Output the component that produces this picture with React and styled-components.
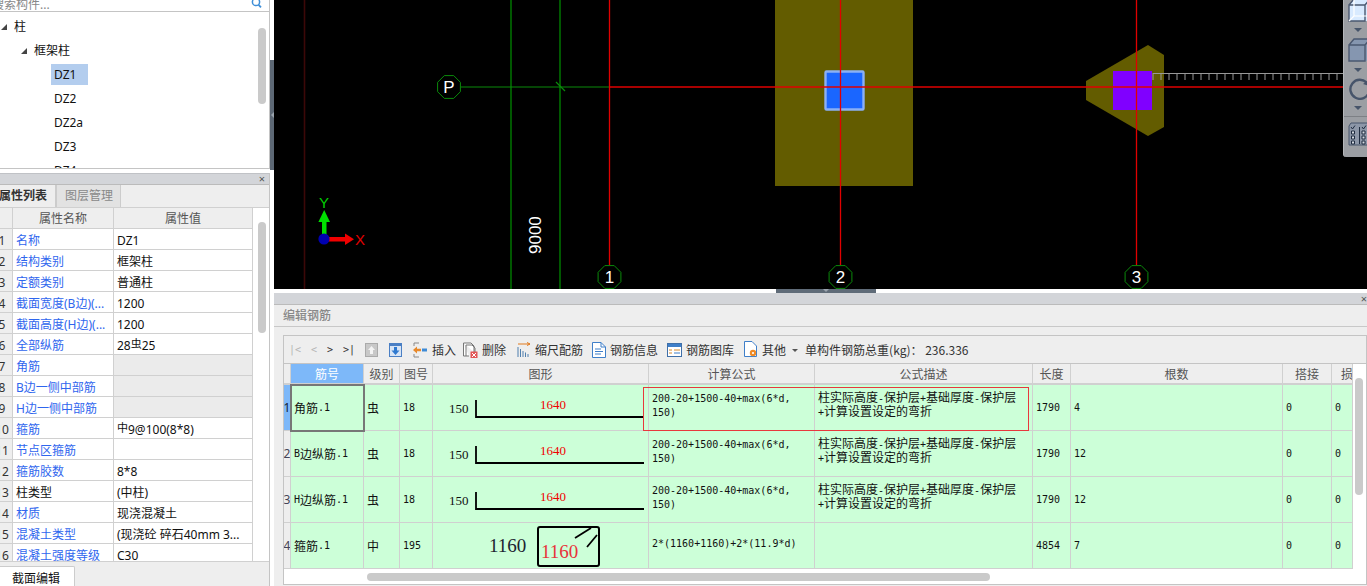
import React from "react";
import styled, { createGlobalStyle } from "styled-components";

const GlobalStyle = createGlobalStyle`
  html, body {
    margin: 0;
    padding: 0;
    background: #fff;
    overflow: hidden;
  }
  * {
    box-sizing: border-box;
  }
`;

const UI_FONT = `"Noto Sans", "Noto Sans CJK SC", sans-serif`;
const CJK_FONT = `"Noto Sans CJK SC", sans-serif`;
const MONO_FONT = `"DejaVu Sans Mono", monospace`;
const LINE = "#d0d0d0";
const GREEN_ROW = "#ccffd8";

const Page = styled.div`
  display: flex;
  width: 1367px;
  height: 586px;
  overflow: hidden;
  font: 12px ${UI_FONT};
  color: #111;
`;

const LeftColumn = styled.div`
  display: flex;
  flex-direction: column;
  width: 270px;
  flex: none;
`;

/* tree */
const TreePanel = styled.div`
  position: relative;
  height: 170px;
  border-right: 1px solid #c4c4c4;
  border-bottom: 1px solid #c4c4c4;
  overflow: hidden;
`;

const SearchBar = styled.div`
  display: flex;
  align-items: flex-end;
  justify-content: space-between;
  height: 12px;
  padding: 0 7px 0 0;
  border-bottom: 1px solid #c4c4c4;
  color: #888;
  line-height: 12px;
  overflow: hidden;

  span {
    margin-left: -8px;
    white-space: nowrap;
  }
`;

const TreeList = styled.div`
  padding-top: 2px;
`;

const TreeRow = styled.div`
  display: flex;
  align-items: center;
  height: 24px;
  padding-left: ${(p) => p.$indent}px;
`;

const TreeArrow = styled.i`
  width: 0;
  height: 0;
  margin: 2px 7px 0 1px;
  border-style: solid;
  border-width: 0 0 6px 6px;
  border-color: transparent transparent #444 transparent;
`;

const TreeLeaf = styled.span`
  height: 21px;
  width: 37px;
  padding-left: 3px;
  line-height: 21px;
  white-space: nowrap;
  background: ${(p) => (p.$selected ? "#b3cdee" : "transparent")};
`;

const ScrollThumb = styled.div`
  position: absolute;
  top: ${(p) => p.$top}px;
  left: ${(p) => p.$left}px;
  width: ${(p) => p.$w}px;
  height: ${(p) => p.$h}px;
  background: #cacaca;
  border-radius: 4px;
`;

/* property list */
const PropertyPanel = styled.div`
  position: relative;
  display: flex;
  flex-direction: column;
  flex: 1;
  margin-top: 4px;
  background: #eee;
  border-right: 1px solid #c4c4c4;
`;

const DockBar = styled.div`
  display: flex;
  align-items: center;
  justify-content: flex-end;
  flex: none;
  height: 12px;
  padding-right: 4px;
  background: #d3d5d9;
  border-top: 1px solid #c0c2c6;
  border-bottom: 1px solid #bbb;
  color: #555;
  font-size: 11px;
  line-height: 10px;
`;

const TabRow = styled.div`
  display: flex;
  flex: none;
  height: 22px;
  overflow: hidden;
`;

const Tab = styled.div`
  width: 65px;
  padding: 0 8px;
  margin-left: ${(p) => (p.$active ? "-9px" : "0")};
  line-height: 22px;
  white-space: nowrap;
  font-weight: ${(p) => (p.$active ? 700 : 400)};
  color: ${(p) => (p.$active ? "#333" : "#888")};
  background: ${(p) => (p.$active ? "#eee" : "#e2e2e2")};
  border-right: 1px solid #ccc;
  border-left: ${(p) => (p.$active ? "none" : "1px solid #ccc")};
`;

const PropertyBody = styled.div`
  height: 355px;
  flex: none;
  background: #fff;
  border-top: 1px solid ${LINE};
  border-bottom: 1px solid ${LINE};
  overflow: hidden;
`;

const PropertyGrid = styled.div`
  display: grid;
  grid-template-columns: 13px 101px 139px;
  grid-auto-rows: 21px;
  width: 253px;
`;

const PropHead = styled.div`
  text-align: center;
  line-height: 20px;
  color: #555;
  background: #eee;
  border-right: 1px solid ${LINE};
  border-bottom: 1px solid ${LINE};
  font-family: ${CJK_FONT};
`;

const PropIndex = styled.div`
  overflow: hidden;
  background: #eee;
  border-right: 1px solid ${LINE};
  border-bottom: 1px solid ${LINE};
  line-height: 24px;
  color: #333;

  span {
    display: block;
    width: 24px;
    margin-left: -10px;
    text-align: center;
  }
`;

const PropName = styled.div`
  padding-left: 3px;
  line-height: 24px;
  white-space: nowrap;
  overflow: hidden;
  color: ${(p) => (p.$plain ? "#111" : "#2f66ee")};
  border-right: 1px solid ${LINE};
  border-bottom: 1px solid ${LINE};
`;

const PropValue = styled.div`
  padding-left: 3px;
  line-height: 24px;
  white-space: nowrap;
  overflow: hidden;
  background: ${(p) => (p.$muted ? "#ebebeb" : "#fff")};
  border-right: 1px solid ${LINE};
  border-bottom: 1px solid ${LINE};
`;

const RaisedMark = styled.span`
  position: relative;
  top: -2px;
  font-size: 11px;
`;

const BottomTabs = styled.div`
  flex: 1;
  padding-top: 4px;
  background: #eee;
`;

const BottomTab = styled.div`
  width: 75px;
  height: 20px;
  padding-left: 12px;
  background: #fff;
  border-right: 1px solid #ccc;
  border-top: 1px solid #ccc;
  border-top-right-radius: 2px;
  line-height: 24px;
  white-space: nowrap;
`;

const SideSplit = styled.div`
  position: relative;
  display: flex;
  align-items: center;
  justify-content: center;
  width: 4px;
  height: 110px;
  margin-top: 60px;
  flex: none;
  background: #5d6875;

  &::after {
    content: "";
    border-style: solid;
    border-width: 3px 3px 3px 0;
    border-color: transparent #9aa3ad transparent transparent;
  }
`;

/* main column */
const MainColumn = styled.div`
  display: flex;
  flex-direction: column;
  flex: 1;
  min-width: 0;
`;

const Canvas = styled.div`
  position: relative;
  flex: none;
  height: 289px;
  background: #000;
  overflow: hidden;

  > svg {
    display: block;
  }
`;

const SideTools = styled.div`
  position: absolute;
  top: 0;
  right: 0;
  display: flex;
  flex-direction: column;
  width: 24px;
  height: 157px;
  padding-left: 4px;
  background: #9b9ea3;
  border-left: 1px solid #b5b7ba;
  border-bottom-left-radius: 3px;
  overflow: hidden;
`;

const SideCaret = styled.i`
  align-self: center;
  width: 0;
  height: 0;
  margin: ${(p) => p.$my}px 0;
  border-style: solid;
  border-width: 4px 4px 0 4px;
  border-color: #46546a transparent transparent transparent;
`;

const SideRule = styled.div`
  height: 1px;
  margin: 0 -4px 5px;
  background: #7d8085;
`;

const HSplitBand = styled.div`
  display: flex;
  justify-content: center;
  flex: none;
  height: 4px;
  background: #fff;
`;

const HSplitHandle = styled.div`
  display: flex;
  justify-content: center;
  width: 100px;
  margin-left: 11px;
  background: #5f6b78;

  &::after {
    content: "";
    height: 0;
    border-style: solid;
    border-width: 3px 3px 0 3px;
    border-color: #9aa3ad transparent transparent transparent;
  }
`;

const EditorDock = styled(DockBar)`
  border-top: none;
  padding-right: 0;
`;

const EditorPanel = styled.div`
  display: flex;
  flex-direction: column;
  flex: 1;
  min-height: 0;
  background: #eee;
`;

const EditorTitle = styled.div`
  flex: none;
  height: 22px;
  padding-left: 9px;
  line-height: 20px;
  color: #888;
  font-family: ${CJK_FONT};
  font-weight: 500;
  border-bottom: 1px solid #c8c8c8;
`;

const EditorBody = styled.div`
  display: flex;
  flex: 1;
  min-height: 0;
  padding: 8px 0 1px 9px;
`;

const Frame = styled.div`
  display: flex;
  flex-direction: column;
  flex: 1;
  border: 1px solid #c4c4c4;
`;

const Toolbar = styled.div`
  display: flex;
  align-items: center;
  flex: none;
  height: 28px;
  padding-left: 5px;
  font-family: ${CJK_FONT};
  color: #333;
  border-bottom: 1px solid #c4c4c4;
  white-space: pre;
`;

const NavGroup = styled.div`
  display: flex;
  align-items: center;
  width: 66px;
  justify-content: space-between;
  font: 10px ${MONO_FONT};
`;

const NavMark = styled.span`
  color: ${(p) => (p.$dim ? "#b5b5b5" : "#333")};
`;

const Tool = styled.div`
  display: flex;
  align-items: center;
  gap: 4px;
  margin-left: ${(p) => p.$ml}px;
`;

const ToolCaret = styled.i`
  width: 0;
  height: 0;
  margin: 1px 7px 0 6px;
  border-style: solid;
  border-width: 3px 3px 0 3px;
  border-color: #555 transparent transparent transparent;
`;

const TableArea = styled.div`
  position: relative;
  flex: 1;
  min-height: 0;
  background: #fff;
  overflow: hidden;
`;

const RebarRow = styled.div`
  position: relative;
  display: grid;
  grid-template-columns: 7px 73px 36px 33px 216px 166px 218px 38px 212px 49px 21px;
  width: 1069px;
  height: ${(p) => p.$h}px;
`;

const HeadCell = styled.div`
  padding-left: ${(p) => p.$pad || 0}px;
  text-align: ${(p) => (p.$pad ? "left" : "center")};
  line-height: 19px;
  font-family: ${CJK_FONT};
  overflow: hidden;
  color: ${(p) => (p.$selected ? "#fff" : "#555")};
  background: ${(p) => (p.$selected ? "#7db8f9" : "#eee")};
  border-right: 1px solid ${LINE};
  border-bottom: 2px solid ${LINE};
`;

const IndexCell = styled.div`
  display: flex;
  align-items: center;
  justify-content: center;
  overflow: hidden;
  color: ${(p) => (p.$selected ? "#123" : "#445")};
  background: ${(p) => (p.$selected ? "#7db8f9" : "#eee")};
  border-right: 1px solid ${LINE};
  border-bottom: 1px solid ${LINE};
`;

const Cell = styled.div`
  display: flex;
  align-items: center;
  padding-left: 3px;
  min-width: 0;
  overflow: hidden;
  line-height: 14px;
  font-family: ${CJK_FONT};
  background: ${GREEN_ROW};
  border-right: 1px solid ${LINE};
  border-bottom: 1px solid ${LINE};
`;

const NameCell = styled(Cell)`
  outline: ${(p) => (p.$selected ? "2px solid #777" : "none")};
  outline-offset: -1px;
  position: relative;
  z-index: ${(p) => (p.$selected ? 1 : 0)};
`;

const ShapeCell = styled(Cell)`
  padding: 0;
`;

const Latin = styled.span`
  font: 10px ${MONO_FONT};
`;

const LinesBlock = styled.div`
  margin-bottom: 8px;
`;

const CellOutline = styled.div`
  position: absolute;
  top: 2px;
  left: 359px;
  width: 386px;
  height: 44px;
  border: 1px solid #e8383d;
  pointer-events: none;
`;

const SHAPE_LABEL = `"Liberation Serif", serif`;

function mixed(text) {
  return text
    .split(/([\x00-\x7f]+)/)
    .filter(Boolean)
    .map((run, i) =>
      /^[\x00-\x7f]/.test(run) ? <Latin key={i}>{run}</Latin> : <span key={i}>{run}</span>
    );
}

function SearchIcon() {
  return (
    <svg width="11" height="12" viewBox="0 0 11 12">
      <circle cx="5" cy="3" r="3.6" fill="none" stroke="#3f8fd8" strokeWidth="1.5" />
      <path d="M7.6 5.8 L10 8.4" stroke="#3f8fd8" strokeWidth="1.8" />
    </svg>
  );
}

function polygonPoints(cx, cy, r, sides) {
  const pts = [];
  for (let i = 0; i < sides; i++) {
    const a = (Math.PI * 2 * (i + 0.5)) / sides;
    pts.push(`${(cx + r * Math.cos(a)).toFixed(1)},${(cy + r * Math.sin(a)).toFixed(1)}`);
  }
  return pts.join(" ");
}

function AxisBubble({ x, y, label }) {
  return (
    <g>
      <polygon points={polygonPoints(x, y, 12.3, 8)} fill="#000" stroke="#0b8a0b" strokeWidth="1" />
      <text x={x} y={y + 6} textAnchor="middle" fill="#fff" fontSize="17" fontFamily="Liberation Sans, sans-serif">
        {label}
      </text>
    </g>
  );
}

function Ruler() {
  const ticks = [];
  for (let x = 1153; x < 1343; x += 8) {
    ticks.push(<line key={x} x1={x} x2={x} y1="73" y2="80" stroke="#999" />);
  }
  return (
    <g>
      <line x1="1153" x2="1343" y1="73.5" y2="73.5" stroke="#999" />
      {ticks}
    </g>
  );
}

function CanvasDrawing() {
  return (
    <svg width="1093" height="289" viewBox="274 0 1093 289">
      <line x1="304.5" x2="304.5" y1="0" y2="289" stroke="#3c0808" strokeWidth="1.6" />
      <line x1="511" x2="511" y1="0" y2="289" stroke="#006e00" strokeWidth="1.6" />
      <line x1="560" x2="560" y1="0" y2="289" stroke="#006e00" strokeWidth="1.6" />
      <rect x="775" y="0" width="138" height="186" fill="#635c00" />
      <polygon points="1086,81 1148,45 1164,55 1164,127 1148,136 1086,100" fill="#635c00" />
      <rect x="825.5" y="71.5" width="38" height="38" fill="#1a66ff" stroke="#8bb0f5" strokeWidth="2.4" rx="1" />
      <rect x="1113" y="71" width="39" height="39" fill="#8000ff" />
      <Ruler />
      <line x1="461" x2="609" y1="87" y2="87" stroke="#0b8a0b" strokeWidth="1.2" />
      <line x1="556" x2="565" y1="82" y2="91" stroke="#0b8a0b" strokeWidth="1.2" />
      <line x1="609" x2="1343" y1="87" y2="87" stroke="#e00000" strokeWidth="1.4" />
      <line x1="609.5" x2="609.5" y1="0" y2="289" stroke="#e00000" strokeWidth="1.3" />
      <line x1="840.5" x2="840.5" y1="0" y2="289" stroke="#e00000" strokeWidth="1.3" />
      <line x1="1136.5" x2="1136.5" y1="0" y2="289" stroke="#e00000" strokeWidth="1.3" />
      <AxisBubble x={449} y={87} label="P" />
      <AxisBubble x={609.5} y={277} label="1" />
      <AxisBubble x={840.5} y={277} label="2" />
      <AxisBubble x={1136.5} y={277} label="3" />
      <text
        transform="translate(541 254) rotate(-90)"
        fill="#fff"
        fontSize="17"
        fontFamily="Liberation Sans, sans-serif"
      >
        9000
      </text>
      <rect x="322" y="220" width="4.5" height="16" fill="#00e000" />
      <polygon points="324.2,210 330,222 318.4,222" fill="#00e000" />
      <text x="324" y="208" textAnchor="middle" fill="#00d000" fontSize="15" fontFamily="Liberation Sans, sans-serif">
        Y
      </text>
      <rect x="328" y="237" width="18" height="4.5" fill="#f00000" />
      <polygon points="354,239.2 345,233.5 345,245" fill="#f00000" />
      <text x="355" y="245" fill="#e00000" fontSize="15" fontFamily="Liberation Sans, sans-serif">
        X
      </text>
      <circle cx="324" cy="239" r="5.6" fill="#0000b0" />
    </svg>
  );
}

function CubeIcon({ fill, top, inner }) {
  return (
    <svg width="22" height="24" viewBox="0 0 22 24" style={{ marginTop: top, flex: "none" }}>
      <path d="M1 7 L6 1 H22 V23 H1 Z" fill={fill} />
      <path d="M1 7 L6 1 H22 M1 7 H17 V23 H1 Z M17 7 L22 1" fill="none" stroke="#4a5870" strokeWidth="1.4" />
      {inner && <path d="M6 2 V18 H22 M6 18 L1 23" fill="none" stroke="#fff" strokeWidth="1.2" />}
    </svg>
  );
}

function RotateIcon() {
  return (
    <svg width="22" height="22" viewBox="0 0 22 22" style={{ flex: "none" }}>
      <path d="M19 5 A9.5 9.5 0 1 0 21 14" fill="none" stroke="#46546a" strokeWidth="2.4" />
      <path d="M15 6 L22 8 L22 1 Z" fill="#46546a" />
    </svg>
  );
}

function ChecklistIcon() {
  return (
    <svg width="22" height="24" viewBox="0 0 22 24" style={{ flex: "none" }}>
      <path d="M1 4 L3 1 H22 V23 H1 Z" fill="#8d97a8" stroke="#46546a" />
      <path d="M11.5 5 V22 M3 5 L4.5 7 L7 3.5 M14 5 L15.5 7 L18 3.5" fill="none" stroke="#1f2c40" />
      <path d="M3.5 9 h3 v3 h-3 z M3.5 14 h3 v3 h-3 z M3.5 19 h3 v3 h-3 z M14 9 h3 v3 h-3 z M14 14 h3 v3 h-3 z M14 19 h3 v3 h-3 z" fill="#d5dae2" stroke="#1f2c40" />
    </svg>
  );
}

function MoveUpIcon() {
  return (
    <svg width="13" height="14" viewBox="0 0 13 14">
      <rect x="0.5" y="0.5" width="12" height="13" fill="#c8c8c8" stroke="#aaa" />
      <path d="M6.5 3 L10 7 H8 V11 H5 V7 H3 Z" fill="#f4f4f4" />
    </svg>
  );
}

function MoveDownIcon() {
  return (
    <svg width="13" height="14" viewBox="0 0 13 14">
      <rect x="0.5" y="0.5" width="12" height="13" fill="#d7e4f5" stroke="#4a7fc4" />
      <rect x="1" y="1" width="11" height="2" fill="#4a7fc4" />
      <path d="M6.5 12 L10.5 7.5 H8 V4 H5 V7.5 H2.5 Z" fill="#2e79d0" />
    </svg>
  );
}

function InsertIcon() {
  return (
    <svg width="16" height="16" viewBox="0 0 16 16">
      <path d="M2 1 H7 M2 1 V4 M2 12 V15 H7" stroke="#888" fill="none" />
      <path d="M1 8 L5 4.5 V6.8 H9 V9.2 H5 V11.5 Z" fill="#e8892b" />
      <rect x="10" y="6.5" width="5" height="3" fill="#3e8bd6" />
    </svg>
  );
}

function DeleteIcon() {
  return (
    <svg width="15" height="16" viewBox="0 0 15 16">
      <path d="M0.5 1 H8 L11 4 V10 M0.5 1 V14 H6" fill="#fff" stroke="#777" />
      <path d="M3 3 H9 L12 6 V11 M3 3 V14" fill="none" stroke="#777" />
      <rect x="7.5" y="9.5" width="7" height="6.5" fill="#e25555" />
      <path d="M9 11 L13 15 M13 11 L9 15" stroke="#fff" />
    </svg>
  );
}

function ScaleIcon() {
  return (
    <svg width="14" height="16" viewBox="0 0 14 16">
      <path d="M1 2 H13 M10 0.5 L13 2 L10 3.5" stroke="#e07a1f" fill="none" />
      <path d="M1 5 V15 M3.5 7 V15 M6 9 V15 M8.5 10.5 V15 M11 12 V15" stroke="#4f7fae" />
    </svg>
  );
}

function InfoIcon() {
  return (
    <svg width="14" height="16" viewBox="0 0 14 16">
      <path d="M0.5 0.5 H9 L13.5 5 V15.5 H0.5 Z" fill="#fff" stroke="#3f7fc9" />
      <path d="M9 0.5 V5 H13.5" fill="none" stroke="#3f7fc9" />
      <path d="M3 7 H9 M3 9.5 H11 M3 12 H9" stroke="#3f7fc9" />
    </svg>
  );
}

function LibraryIcon() {
  return (
    <svg width="15" height="14" viewBox="0 0 15 14">
      <rect x="0.5" y="0.5" width="14" height="13" fill="#fff" stroke="#3f6fa8" />
      <rect x="1" y="1" width="13" height="3" fill="#3f7fc9" />
      <path d="M2 7 H5 M7 7 H13 M2 10 H5" stroke="#d88a2c" />
      <path d="M7 10 H13" stroke="#3f7fc9" />
    </svg>
  );
}

function OtherIcon() {
  return (
    <svg width="14" height="17" viewBox="0 0 14 17">
      <path d="M0.5 0.5 H8 L12.5 5 V15.5 H0.5 Z" fill="#fff" stroke="#3f7fc9" />
      <circle cx="9" cy="12" r="3.2" fill="#f08a24" />
      <circle cx="9" cy="12" r="1.1" fill="#fff" />
    </svg>
  );
}

function BendShape() {
  return (
    <svg width="215" height="45" viewBox="0 0 215 45">
      <text x="16" y="28" fontSize="13" fill="#111" fontFamily={SHAPE_LABEL}>150</text>
      <text x="107" y="24" fontSize="13" fill="#f00000" fontFamily={SHAPE_LABEL}>1640</text>
      <path d="M43 15 V32 H211" fill="none" stroke="#000" strokeWidth="1.8" />
    </svg>
  );
}

function StirrupShape() {
  return (
    <svg width="215" height="45" viewBox="0 0 215 45">
      <text x="56" y="29" fontSize="19" fill="#1c2430" fontFamily={SHAPE_LABEL}>1160</text>
      <rect x="105" y="4" width="61" height="39" rx="2" fill="none" stroke="#000" strokeWidth="2" />
      <text x="108" y="34.5" fontSize="19" fill="#e8333a" fontFamily={SHAPE_LABEL}>1160</text>
      <path d="M142 15 L158 5 M154 24 L164 12" stroke="#000" strokeWidth="1.8" />
    </svg>
  );
}

const TREE = [
  { label: "柱", indent: 0, arrow: true },
  { label: "框架柱", indent: 20, arrow: true },
  { label: "DZ1", indent: 51, selected: true },
  { label: "DZ2", indent: 51 },
  { label: "DZ2a", indent: 51 },
  { label: "DZ3", indent: 51 },
  { label: "DZ4", indent: 51 },
];

const PROPERTIES = [
  { name: "名称", value: "DZ1" },
  { name: "结构类别", value: "框架柱" },
  { name: "定额类别", value: "普通柱" },
  { name: "截面宽度(B边)(...", value: "1200" },
  { name: "截面高度(H边)(...", value: "1200" },
  { name: "全部纵筋", value: <>28<RaisedMark>虫</RaisedMark>25</> },
  { name: "角筋", muted: true },
  { name: "B边一侧中部筋", muted: true },
  { name: "H边一侧中部筋", muted: true },
  { name: "箍筋", value: <><RaisedMark>中</RaisedMark>9@100(8*8)</> },
  { name: "节点区箍筋" },
  { name: "箍筋胶数", value: "8*8" },
  { name: "柱类型", value: "(中柱)", plain: true },
  { name: "材质", value: "现浇混凝土" },
  { name: "混凝土类型", value: "(现浇砼 碎石40mm 3..." },
  { name: "混凝土强度等级", value: "C30" },
];

const TOOLS = [
  { Icon: InsertIcon, label: "插入", ml: 10 },
  { Icon: DeleteIcon, label: "删除", ml: 7 },
  { Icon: ScaleIcon, label: "缩尺配筋", ml: 11 },
  { Icon: InfoIcon, label: "钢筋信息", ml: 9 },
  { Icon: LibraryIcon, label: "钢筋图库", ml: 9 },
  { Icon: OtherIcon, label: "其他", ml: 10 },
];

const HEADERS = ["筋号", "级别", "图号", "图形", "计算公式", "公式描述", "长度", "根数", "搭接"];

const DESCRIPTION = ["柱实际高度-保护层+基础厚度-保护层", "+计算设置设定的弯折"];

const REBARS = [
  { name: "角筋.1", grade: "虫", code: "18", count: "4", shape: "bend", formula: ["200-20+1500-40+max(6*d,", "150)"], description: DESCRIPTION, length: "1790" },
  { name: "B边纵筋.1", grade: "虫", code: "18", count: "12", shape: "bend", formula: ["200-20+1500-40+max(6*d,", "150)"], description: DESCRIPTION, length: "1790" },
  { name: "H边纵筋.1", grade: "虫", code: "18", count: "12", shape: "bend", formula: ["200-20+1500-40+max(6*d,", "150)"], description: DESCRIPTION, length: "1790" },
  { name: "箍筋.1", grade: "中", code: "195", count: "7", shape: "stirrup", formula: ["2*(1160+1160)+2*(11.9*d)"], description: [], length: "4854" },
];

function LinesText({ lines }) {
  return (
    <LinesBlock>
      {lines.map((line, i) => (
        <div key={i}>{mixed(line)}</div>
      ))}
    </LinesBlock>
  );
}

export default function App() {
  return (
    <Page>
      <GlobalStyle />
      <LeftColumn>
        <TreePanel>
          <SearchBar>
            <span>搜索构件...</span>
            <SearchIcon />
          </SearchBar>
          <TreeList>
            {TREE.map((node) => (
              <TreeRow key={node.label} $indent={node.indent}>
                {node.arrow ? (
                  <>
                    <TreeArrow />
                    <span>{node.label}</span>
                  </>
                ) : (
                  <TreeLeaf $selected={node.selected}>{node.label}</TreeLeaf>
                )}
              </TreeRow>
            ))}
          </TreeList>
          <ScrollThumb $top={28} $left={258} $w={8} $h={76} />
        </TreePanel>
        <PropertyPanel>
          <DockBar>×</DockBar>
          <TabRow>
            <Tab $active>属性列表</Tab>
            <Tab>图层管理</Tab>
          </TabRow>
          <PropertyBody>
            <PropertyGrid>
              <PropHead />
              <PropHead>属性名称</PropHead>
              <PropHead>属性值</PropHead>
              {PROPERTIES.map((row, i) => (
                <React.Fragment key={row.name}>
                  <PropIndex>
                    <span>{i + 1}</span>
                  </PropIndex>
                  <PropName $plain={row.plain}>{row.name}</PropName>
                  <PropValue $muted={row.muted}>{row.value}</PropValue>
                </React.Fragment>
              ))}
            </PropertyGrid>
          </PropertyBody>
          <ScrollThumb $top={49} $left={258} $w={8} $h={111} />
          <BottomTabs>
            <BottomTab>截面编辑</BottomTab>
          </BottomTabs>
        </PropertyPanel>
      </LeftColumn>
      <SideSplit />
      <MainColumn>
        <Canvas>
          <CanvasDrawing />
          <SideTools>
            <CubeIcon fill="#d8eaff" top={-2} inner />
            <SideCaret $my={6} />
            <CubeIcon fill="#8596b0" top={0} />
            <SideCaret $my={6} />
            <RotateIcon />
            <SideCaret $my={6} />
            <SideRule />
            <ChecklistIcon />
          </SideTools>
        </Canvas>
        <HSplitBand>
          <HSplitHandle />
        </HSplitBand>
        <EditorDock>×</EditorDock>
        <EditorPanel>
          <EditorTitle>编辑钢筋</EditorTitle>
          <EditorBody>
            <Frame>
              <Toolbar>
                <NavGroup>
                  <NavMark $dim>|&lt;</NavMark>
                  <NavMark $dim>&lt;</NavMark>
                  <NavMark>&gt;</NavMark>
                  <NavMark>&gt;|</NavMark>
                </NavGroup>
                <Tool $ml={10}>
                  <MoveUpIcon />
                </Tool>
                <Tool $ml={11}>
                  <MoveDownIcon />
                </Tool>
                {TOOLS.map(({ Icon, label, ml }) => (
                  <Tool key={label} $ml={ml}>
                    <Icon />
                    <span>{label}</span>
                  </Tool>
                ))}
                <ToolCaret />
                <span>单构件钢筋总重(kg)： 236.336</span>
              </Toolbar>
              <TableArea>
                <RebarRow $h={21}>
                  <HeadCell />
                  {HEADERS.map((title, i) => (
                    <HeadCell key={title} $selected={i === 0}>{title}</HeadCell>
                  ))}
                  <HeadCell $pad={9}>损</HeadCell>
                </RebarRow>
                {REBARS.map((rebar, i) => (
                  <RebarRow key={rebar.name} $h={46}>
                    <IndexCell $selected={i === 0}>{i + 1}</IndexCell>
                    <NameCell $selected={i === 0}>{mixed(rebar.name)}</NameCell>
                    <Cell>{rebar.grade}</Cell>
                    <Cell>{mixed(rebar.code)}</Cell>
                    <ShapeCell>{rebar.shape === "bend" ? <BendShape /> : <StirrupShape />}</ShapeCell>
                    <Cell>
                      <LinesText lines={rebar.formula} />
                    </Cell>
                    <Cell>
                      <LinesText lines={rebar.description} />
                    </Cell>
                    <Cell>{mixed(rebar.length)}</Cell>
                    <Cell>{mixed(rebar.count)}</Cell>
                    <Cell>{mixed("0")}</Cell>
                    <Cell>{mixed("0")}</Cell>
                    {i === 0 && <CellOutline />}
                  </RebarRow>
                ))}
                <ScrollThumb $top={14} $left={1071} $w={8} $h={117} />
                <ScrollThumb $top={209} $left={83} $w={623} $h={8} />
              </TableArea>
            </Frame>
          </EditorBody>
        </EditorPanel>
      </MainColumn>
    </Page>
  );
}
